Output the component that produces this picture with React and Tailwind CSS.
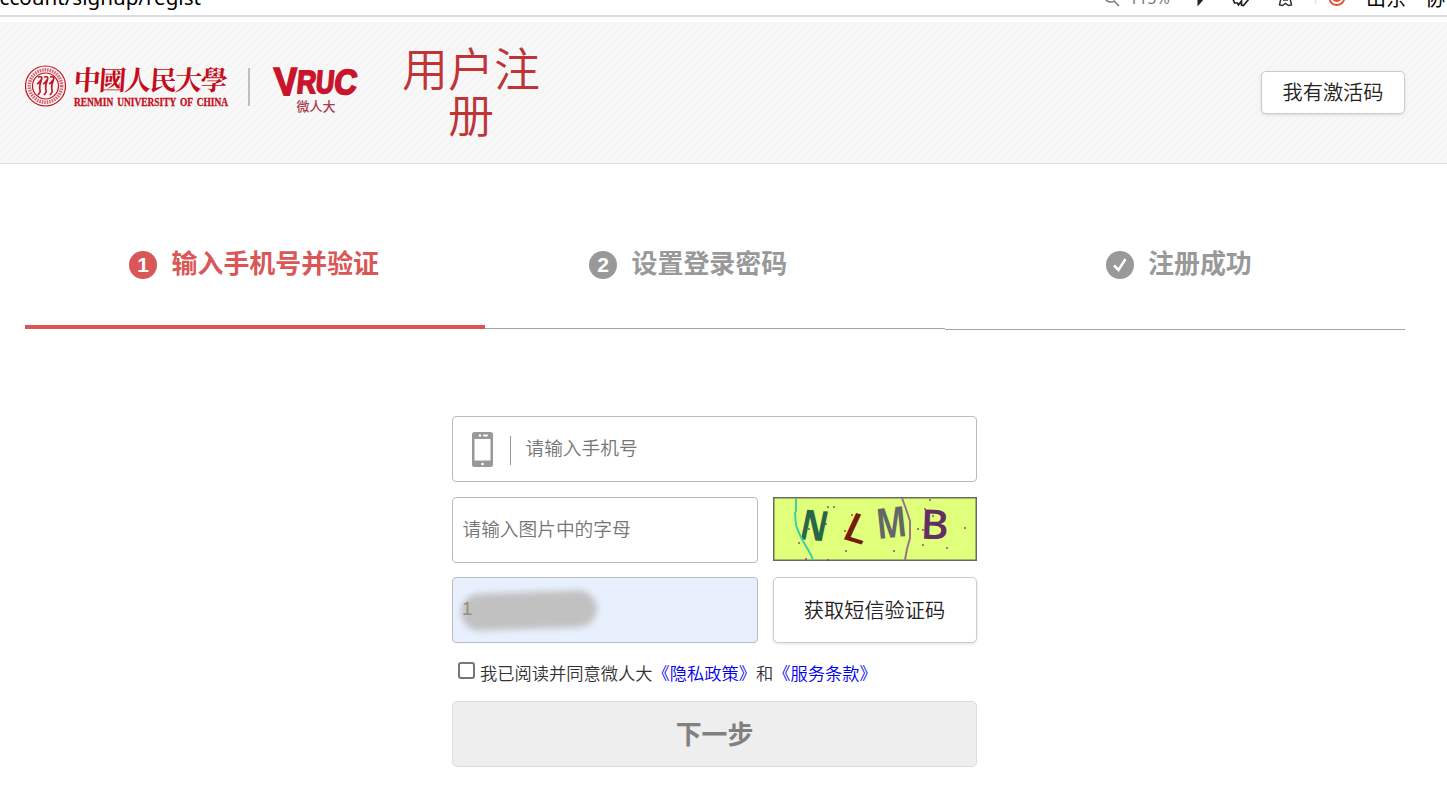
import clsx from "clsx";

const CJK = "font-['Liberation_Sans','Noto_Sans_CJK_SC',sans-serif]";

const BrowserBar = () => {
  return (
    <div className="h-[17px] flex justify-between border-b-2 border-[#dddde8] bg-white overflow-hidden">
      <div className="-ml-[12px] -mt-[17px] h-8 text-[20.6px] leading-7 text-black whitespace-nowrap font-['Noto_Sans',sans-serif]">
        account/signup/regist
      </div>

      {/* toolbar icons */}
      <svg className="w-[347px] h-[15px] shrink-0" viewBox="1100 0 347 15" fill="none">
        <path d="M1105 -2a6 6 0 0 0 9 3l5 5" stroke="#777" strokeWidth="1.500" />
        <text x="1129" y="3.500" fontSize="16" fill="#777" fontFamily="Noto Sans, sans-serif">115%</text>
        <path d="M1197.500 6.500v-8h7z" fill="#222" />
        <path d="M1233 -1l1.500 4h3l1 2 3-4v4l2 .5 5-6" stroke="#222" strokeWidth="1.700" />
        <path d="M1281 -2l-1.500 7 3 .5 3-2 3 2 3-.5-1.500-7M1283 0h5" stroke="#333" strokeWidth="1.500" />
        <path d="M1315.500 0v4" stroke="#e2e2ea" strokeWidth="1.500" />
        <path d="M1329.500 -1c2 8 12 8 15 0" stroke="#ee4b30" strokeWidth="1.800" />
        <path d="M1332 -1c2 4 8 4 9 0z" fill="#ee4b30" />
        <text x="1366" y="5.500" fontSize="20" fill="#000" fontFamily="Noto Sans CJK SC, sans-serif">山东</text>
        <text x="1425" y="5.500" fontSize="20" fill="#000" fontFamily="Noto Sans CJK SC, sans-serif">协</text>
      </svg>
    </div>
  );
};

const Logo = () => {
  return (
    <svg className="w-[340px] h-[60px] shrink-0" viewBox="25 60 340 60" fill="none">
      {/* seal */}
      <g stroke="#c51220">
        <circle cx="45.500" cy="86" r="20" strokeWidth="1.200" />
        <circle cx="45.500" cy="86" r="16.200" strokeWidth="3.500" strokeDasharray="1.500 1" opacity=".65" />
        <circle cx="45.500" cy="86" r="13" strokeWidth="1.200" />
        <path
          d="M38 77c5-1 4 1 3 4s-2 6-1 9-1 3-2 5M44 77c5-1 4 1 3 4s-2 6-1 9-1 3-2 5M50 77c5-1 4 1 3 4s-2 6-1 9-1 3-2 5M37 84c2-1 3-2 4-4M43 84c2-1 3-2 4-4M49 84c2-1 3-2 4-4"
          strokeWidth="1.700"
        />
      </g>
      <text
        transform="translate(73 89.500) skewX(-4)"
        fontSize="27"
        fontWeight="700"
        fill="#c30d1b"
        textLength="154"
        fontFamily="Noto Serif CJK SC, Noto Sans CJK TC, Noto Sans CJK SC, sans-serif"
      >
        中國人民大學
      </text>
      <text
        x="74"
        y="106"
        fontSize="11.500"
        fontWeight="700"
        fill="#c30d1b"
        stroke="#c30d1b"
        strokeWidth=".3"
        wordSpacing="2"
        textLength="154"
        lengthAdjust="spacingAndGlyphs"
        fontFamily="Liberation Serif, serif"
      >
        RENMIN UNIVERSITY OF CHINA
      </text>
      <path d="M249 68v38" stroke="#b5b5b5" strokeWidth="1.700" />

      {/* VRUC */}
      <g
        fill="#c9152b"
        stroke="#c9152b"
        strokeWidth="1.800"
        fontFamily="Liberation Sans, sans-serif"
        fontWeight="700"
      >
        <text transform="translate(275 94.500) skewX(3) scale(.9 1)" fontSize="39">V</text>
        <text transform="translate(296 93) skewX(-5) scale(.84 1)" fontSize="32">R</text>
        <text transform="translate(315 93) skewX(-5) scale(.8 1)" fontSize="32">U</text>
        <text transform="translate(333 93.500) skewX(-7) scale(.9 1)" fontSize="35">C</text>
      </g>
      <text x="296.500" y="110.500" fontSize="13" fontWeight="500" fill="#a63b50" fontFamily="Noto Sans CJK SC, sans-serif">
        微人大
      </text>
    </svg>
  );
};

const Header = () => {
  return (
    <header className="mt-[5px] h-[142px] pl-[25px] pr-[42px] flex items-start border-b border-[#dcdcdc] bg-[repeating-linear-gradient(135deg,#f5f5f5_0px,#f5f5f5_3.3px,#f8f8f8_3.3px,#f8f8f8_5.657px)]">
      <div className="mt-[38px]">
        <Logo />
      </div>
      <h1 className="ml-[36px] mt-[25px] w-[140px] text-center text-[46px] leading-[46px] font-[350] text-[#bf3537]">
        用户注册
      </h1>
      <button className="ml-auto mt-[49px] w-[144px] h-[43px] pt-0.5 rounded-[5px] border border-[#ccc] bg-white text-[20.2px] leading-none font-[350] text-[#222] shadow-[0_1px_3px_rgba(0,0,0,0.12)]">
        我有激活码
      </button>
    </header>
  );
};

const Badge = ({ children, active }) => {
  return (
    <span
      className={clsx(
        "mt-px size-7 shrink-0 rounded-full flex items-center justify-center pb-0.5 text-[21px] leading-none font-bold text-white",
        active ? "bg-[#d95757]" : "bg-[#999]"
      )}
    >
      {children}
    </span>
  );
};

const Steps = () => {
  return (
    <ol className="mx-[25px] mt-[86px] w-[1380px] flex items-start text-[25.95px] leading-7 font-bold text-[#999]">
      <li className="w-[460px] h-[79px] pl-[104px] flex items-start gap-[14.5px] border-b-4 border-[#d95757] text-[#d95757]">
        <Badge active>1</Badge>
        <span>输入手机号并验证</span>
      </li>
      <li className="w-[460px] h-[79px] pl-[104px] flex items-start gap-[14.5px] border-b border-[#a5a5a5]">
        <Badge>2</Badge>
        <span>设置登录密码</span>
      </li>
      <li className="w-[460px] h-[80px] pl-[161px] flex items-start gap-[14px] border-b border-[#a5a5a5]">
        <Badge>
          <svg className="size-7 -mb-0.5" viewBox="0 0 28 28" fill="none">
            <path d="M8 14.500l4.500 4.500 7-11" stroke="#fff" strokeWidth="2.500" />
          </svg>
        </Badge>
        <span>注册成功</span>
      </li>
    </ol>
  );
};

const PhoneIcon = () => {
  return (
    <svg className="w-[21px] h-[35px]" viewBox="0 0 21 35">
      <rect width="21" height="35" rx="2.500" fill="#999" />
      <path d="M2.500 7h16v21.500h-16z" fill="#fff" />
      <circle cx="8" cy="3.500" r="1.200" fill="#fff" />
      <rect x="11" y="2.500" width="5" height="2" rx="1" fill="#fff" />
      <circle cx="10.500" cy="32" r="1.300" fill="#fff" />
    </svg>
  );
};

// x, y of the noise pixels
const NOISE = [
  [55, 10], [61, 10], [79, 18], [53, 27], [36, 32], [72, 34], [26, 46], [33, 62],
  [55, 63], [73, 54], [121, 54], [157, 3], [152, 12], [160, 19], [145, 32],
  [150, 48], [174, 51], [192, 31], [150, 33],
];

const Captcha = () => {
  return (
    <svg className="w-[204px] h-16" viewBox="0 0 204 64" fill="none">
      <rect x=".75" y=".75" width="202.500" height="62.500" fill="#e0ff7b" stroke="#6b6b5c" strokeWidth="1.500" />
      <g fontFamily="Open Sans, sans-serif" fontWeight="600">
        <text transform="translate(25 42) rotate(5) skewX(-7) scale(.78 1)" fontSize="42" fontWeight="700" fill="#286648">N</text>
        <text transform="translate(67 41) rotate(17) skewX(-8) scale(1.100 1)" fontSize="40" fill="#751b0d">L</text>
        <text transform="translate(105 42) rotate(-6) scale(.76 1)" fontSize="42" fontWeight="700" fill="#646767">M</text>
        <text transform="translate(147 41.500) rotate(2) scale(1.050 1)" fontSize="41" fill="#632e63">B</text>
      </g>
      <path d="M23 1v13l-1 2 1 12 3 8 4 8 4 7 4 7 2 5" stroke="#38cfa3" strokeWidth="1.900" />
      <path d="M129 1l4 11 4 12v17l-3 11-2 11" stroke="#94718a" strokeWidth="1.900" />
      {NOISE.map(([x, y], i) => (
        <rect key={i} x={x - 0.8} y={y - 0.8} width="1.600" height="1.600" fill="#79366f" />
      ))}
    </svg>
  );
};

const RegisterForm = () => {
  return (
    <form className="ml-[452px] mt-[86px] w-[525px] flex flex-col font-[350]">
      <div className="h-[66px] pl-[19px] flex items-center rounded-[4px] border border-[#bbb]">
        <PhoneIcon />
        <span className="ml-[17px] mt-0.5 w-px h-[29px] bg-[#999]" />
        <input
          className="ml-[14.5px] flex-1 h-10 outline-none text-[18.7px] placeholder:text-[#757575]"
          placeholder="请输入手机号"
        />
      </div>

      <div className="mt-[15px] flex items-start gap-[15px]">
        <input
          className="w-[306px] h-[66px] px-[9.5px] rounded-[4px] border border-[#bbb] outline-none text-[18.7px] placeholder:text-[#757575]"
          placeholder="请输入图片中的字母"
        />
        <Captcha />
      </div>

      <div className="mt-[14px] flex gap-[15px]">
        <div className="w-[306px] h-[66px] pl-[9px] flex items-center rounded-[4px] border border-[#b9bcc4] bg-[#e8f0fe] text-[18.7px] text-[#9a8a80]">
          {/* masked number */}
          <span className="-ml-px w-[136px] h-[37px] rounded-full bg-[#c1c1c1] blur-[3px] -rotate-2" />
          <span className="-ml-[135px] z-10 -mt-0.5 w-2.5">1</span>
        </div>
        <button
          type="button"
          className="w-[204px] h-[66px] pt-0.5 pr-px rounded-[5px] border border-[#ccc] bg-white text-[20.2px] font-[350] text-[#222] shadow-[0_1px_3px_rgba(0,0,0,0.12)]"
        >
          获取短信验证码
        </button>
      </div>

      <label className="mt-[19px] h-6 pl-1.5 flex items-start text-[17.25px] leading-6 text-[#333] whitespace-nowrap">
        <input
          type="checkbox"
          className="appearance-none size-[17px] shrink-0 rounded-[3px] border-2 border-[#767676] bg-white"
        />
        <span className="ml-[5px]">
          我已阅读并同意微人大
          <a className="text-[#0000ee]">《隐私政策》</a>和<a className="text-[#0000ee]">《服务条款》</a>
        </span>
      </label>

      <button
        type="button"
        className="mt-[15px] h-[66px] pt-0.5 rounded-[5px] border border-[#ddd] bg-[#eee] text-[25.9px] font-bold text-[#808080]"
      >
        下一步
      </button>
    </form>
  );
};

const App = () => {
  return (
    <div className={clsx("w-full h-[800px] bg-white overflow-hidden", CJK)}>
      <BrowserBar />
      <Header />
      <Steps />
      <RegisterForm />
    </div>
  );
};

export default App;
